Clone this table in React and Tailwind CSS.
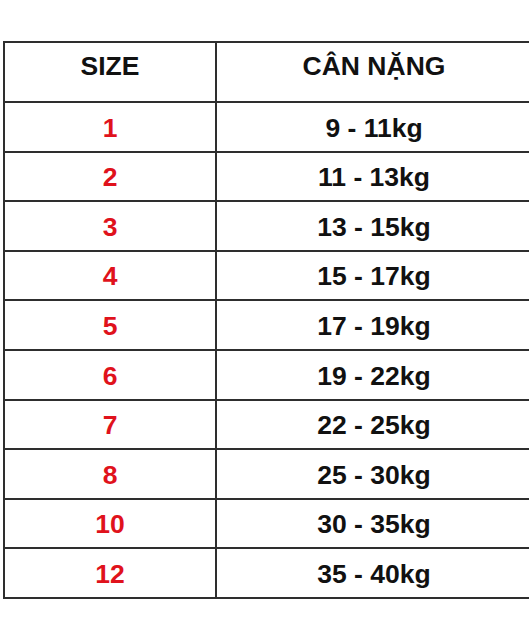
import React from "react";

const rows = [
  ["1", "9 - 11kg"],
  ["2", "11 - 13kg"],
  ["3", "13 - 15kg"],
  ["4", "15 - 17kg"],
  ["5", "17 - 19kg"],
  ["6", "19 - 22kg"],
  ["7", "22 - 25kg"],
  ["8", "25 - 30kg"],
  ["10", "30 - 35kg"],
  ["12", "35 - 40kg"],
];

const App = () => {
  return (
    <div
      className="w-[529px] h-[635px] bg-white overflow-hidden pt-[41px] pl-[3px]"
      style={{ fontFamily: '"Liberation Sans", Arial, sans-serif' }}
    >
      <div className="w-[528px] border-l-2 border-t-2 border-[#2e2e2e] font-bold text-[26.5px] leading-none">
        <div className="flex h-[60px] border-b-2 border-[#2e2e2e] text-[#111]">
          <div className="w-[212px] flex items-center justify-center border-r-2 border-[#2e2e2e] pb-[11px]">
            SIZE
          </div>
          <div className="flex-1 flex items-center justify-center pb-[11px]">
            CÂN NẶNG
          </div>
        </div>
        {rows.map(([size, weight]) => (
          <div
            key={size}
            className="flex h-[49.6px] border-b-2 border-[#2e2e2e]"
          >
            <div className="w-[212px] flex items-center justify-center border-r-2 border-[#2e2e2e] text-[#e0121c] pt-[2px]">
              {size}
            </div>
            <div className="flex-1 flex items-center justify-center text-[#111] pt-[2px]">
              {weight}
            </div>
          </div>
        ))}
      </div>
    </div>
  );
};

export default App;
